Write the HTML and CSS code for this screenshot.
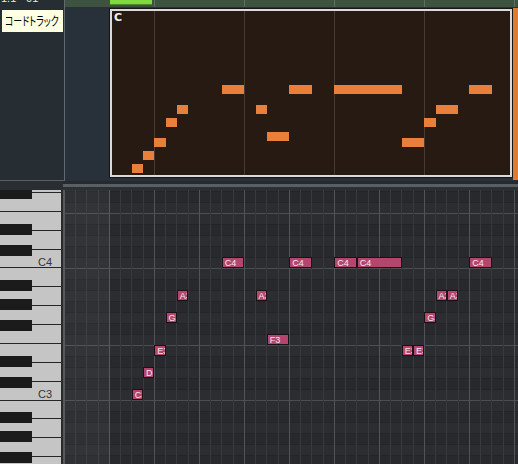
FILE: index.html
```html
<!DOCTYPE html>
<html lang="ja">
<head>
<meta charset="utf-8">
<title>Piano Roll</title>
<link rel="stylesheet" href="styles.css">
</head>
<body>
<div class="app">
  <div class="top">
    <div class="track-head">
      <div class="track-name">1.1 - 01</div>
      <div class="tooltip"><span class="tooltip-text">コードトラック</span></div>
    </div>
    <div class="lane">
      <div class="ruler"><div class="ruler-mark"></div></div>
      <div class="lane-body">
        <div class="chord-panel">
          <div class="chord-label">C</div>
          <div class="cn" style="left:19.8px;top:153px;width:11.25px"></div>
          <div class="cn" style="left:31.05px;top:140px;width:11.25px"></div>
          <div class="cn" style="left:42.3px;top:127px;width:11.25px"></div>
          <div class="cn" style="left:53.55px;top:107px;width:11.25px"></div>
          <div class="cn" style="left:64.8px;top:94px;width:11.25px"></div>
          <div class="cn" style="left:109.8px;top:74px;width:22.5px"></div>
          <div class="cn" style="left:143.55px;top:94px;width:11.25px"></div>
          <div class="cn" style="left:154.8px;top:120.5px;width:22.5px"></div>
          <div class="cn" style="left:177.3px;top:74px;width:22.5px"></div>
          <div class="cn" style="left:222.3px;top:74px;width:67.5px"></div>
          <div class="cn" style="left:289.8px;top:127px;width:22.5px"></div>
          <div class="cn" style="left:312.3px;top:107px;width:11.25px"></div>
          <div class="cn" style="left:323.55px;top:94px;width:22.5px"></div>
          <div class="cn" style="left:357.3px;top:74px;width:22.5px"></div>
        </div>
        <div class="orange"></div>
      </div>
    </div>
  </div>
  <div class="sep"><div class="sep-left"></div><div class="sep-right"></div></div>
  <div class="roll">
    <div class="keys">
      <svg width="61" height="274" viewBox="0 0 61 274" xmlns="http://www.w3.org/2000/svg">
        <rect x="0" y="0" width="61" height="274" fill="#c5c5c5"/>
        <g fill="#262626">
          <rect x="0" y="2" width="61" height="1"/>
          <rect x="0" y="21" width="61" height="1"/>
          <rect x="0" y="40" width="61" height="1"/>
          <rect x="0" y="59" width="61" height="1"/>
          <rect x="0" y="77" width="61" height="1"/>
          <rect x="0" y="96" width="61" height="1"/>
          <rect x="0" y="115" width="61" height="1"/>
          <rect x="0" y="134" width="61" height="1"/>
          <rect x="0" y="153" width="61" height="1"/>
          <rect x="0" y="172" width="61" height="1"/>
          <rect x="0" y="191" width="61" height="1"/>
          <rect x="0" y="210" width="61" height="1"/>
          <rect x="0" y="228" width="61" height="1"/>
          <rect x="0" y="247" width="61" height="1"/>
          <rect x="0" y="266" width="61" height="1"/>
        </g>
        <g fill="#1b1b1b">
          <rect x="0" y="-2" width="32" height="11"/>
          <rect x="0" y="34" width="32" height="11"/>
          <rect x="0" y="55" width="32" height="11"/>
          <rect x="0" y="90" width="32" height="11"/>
          <rect x="0" y="109" width="32" height="11"/>
          <rect x="0" y="130" width="32" height="11"/>
          <rect x="0" y="166" width="32" height="11"/>
          <rect x="0" y="187" width="32" height="11"/>
          <rect x="0" y="222" width="32" height="11"/>
          <rect x="0" y="241" width="32" height="11"/>
          <rect x="0" y="262" width="32" height="11"/>
        </g>
        <text class="key-label" x="52" y="76" text-anchor="end">C4</text>
        <text class="key-label" x="52" y="208" text-anchor="end">C3</text>
      </svg>
    </div>
    <div class="grid">
      <div class="note" style="left:67.8px;top:199px;width:11.25px">C3</div>
      <div class="note" style="left:79.05px;top:177px;width:11.25px">D3</div>
      <div class="note" style="left:90.3px;top:155px;width:11.25px">E3</div>
      <div class="note" style="left:101.55px;top:122px;width:11.25px">G3</div>
      <div class="note" style="left:112.8px;top:100px;width:11.25px">A3</div>
      <div class="note" style="left:157.8px;top:67px;width:22.5px">C4</div>
      <div class="note" style="left:191.55px;top:100px;width:11.25px">A3</div>
      <div class="note" style="left:202.8px;top:144px;width:22.5px">F3</div>
      <div class="note" style="left:225.3px;top:67px;width:22.5px">C4</div>
      <div class="note" style="left:270.3px;top:67px;width:22.5px">C4</div>
      <div class="note" style="left:292.8px;top:67px;width:45px">C4</div>
      <div class="note" style="left:337.8px;top:155px;width:11.25px">E3</div>
      <div class="note" style="left:349.05px;top:155px;width:11.25px">E3</div>
      <div class="note" style="left:360.3px;top:122px;width:11.25px">G3</div>
      <div class="note" style="left:371.55px;top:100px;width:11.25px">A3</div>
      <div class="note" style="left:382.8px;top:100px;width:11.25px">A3</div>
      <div class="note" style="left:405.3px;top:67px;width:22.5px">C4</div>
    </div>
  </div>
</div>
</body>
</html>
```
FILE: styles.css
```css
* { box-sizing: border-box; margin: 0; padding: 0; }
html, body { width: 518px; height: 464px; overflow: hidden; }
body { background: #2a2e33; font-family: "Liberation Sans", Arial, sans-serif; }

.app { display: flex; flex-direction: column; width: 518px; height: 464px; }

.top { display: flex; height: 181px; flex: none; }

.track-head {
  position: relative;
  width: 65px;
  background: #262d33;
  border-right: 1px solid #63696f;
  border-bottom: 1px solid #585e64;
  overflow: hidden;
}
.track-name {
  color: #e6e8ea;
  font-size: 11px;
  line-height: 12px;
  margin-top: -8px;
  padding-left: 1px;
  white-space: nowrap;
}
.tooltip {
  position: absolute;
  left: 2px;
  top: 10px;
  width: 61px;
  height: 22px;
  background: #ffffe1;
  color: #000;
  font-family: "Noto Sans CJK JP", sans-serif;
  font-size: 12px;
  line-height: 22px;
  padding-left: 3px;
  white-space: nowrap;
  overflow: hidden;
}
.tooltip-text {
  display: inline-block;
  font-feature-settings: "palt";
  transform: scaleX(0.74);
  transform-origin: left center;
}

.lane { flex: 1; display: flex; flex-direction: column; background: #28313a; }

.ruler {
  height: 7px;
  flex: none;
  background:
    repeating-linear-gradient(to right, transparent 0 89px, #5c715c 89px 90px),
    #3d523f;
}
.ruler-mark {
  margin-left: 45px;
  width: 42px;
  height: 5px;
  background: #80d93c;
  border-bottom: 1px solid #4d8c27;
}

.lane-body { flex: 1; display: flex; padding-left: 45px; }

.chord-panel {
  position: relative;
  width: 402px;
  margin: 2px 0 4px;
  border: 2px solid #dadada;
  box-shadow: 0 0 0 1px #161616;
  background:
    repeating-linear-gradient(to right, transparent 0 42px, #4a392f 42px 43px, transparent 43px 90px),
    #261a12;
}
.chord-label {
  color: #f2f2f2;
  font: bold 11px/11px "DejaVu Sans", sans-serif;
  padding: 1px 0 0 2px;
}
.cn { position: absolute; height: 9px; background: #e8803c; }

.orange { width: 5px; margin: 1px 0 1px 1px; background: #e27a34; }

.sep { display: flex; height: 9px; flex: none; }
.sep-left { width: 63px; background: #2a2e32; }
.sep-right {
  flex: 1;
  background: linear-gradient(to bottom, #262a2e 0 3px, #5a5f64 3px 6px, #2c2f33 6px 9px);
}

.roll { display: flex; flex: 1; min-height: 0; }
.keys { width: 63px; flex: none; border-right: 2px solid #2b2b2b; overflow: hidden; }
.keys svg { display: block; }
.key-label { font-family: "Liberation Sans", Arial, sans-serif; font-size: 11px; fill: #363636; }

.grid {
  flex: 1;
  position: relative;
  overflow: hidden;
  border-left: 1px solid #55595e;
  background:
    linear-gradient(to right, rgba(255,255,255,0.035) 0 46px, transparent 46px),
    repeating-linear-gradient(to right, #505358 0 1px, transparent 1px 45px),
    repeating-linear-gradient(to right, #37393d 0 1px, transparent 1px 11.25px),
    repeating-linear-gradient(to bottom, transparent 0 23px, #4a4d51 23px 24px, transparent 24px 78px, #4a4d51 78px 79px, transparent 79px 132px),
    repeating-linear-gradient(to bottom, #232529 1px 2px, transparent 2px 12px),
    repeating-linear-gradient(to bottom,
      #27292c 1px 12px, #2b2d31 12px 34px, #27292c 34px 45px, #2b2d31 45px 56px,
      #27292c 56px 67px, #2b2d31 67px 89px, #27292c 89px 100px, #2b2d31 100px 111px,
      #27292c 111px 122px, #2b2d31 122px 133px);
}

.note {
  position: absolute;
  height: 11px;
  border: 1px solid #1d1115;
  background: #b4466e;
  color: #f6e8ee;
  font: 9px/10px "Liberation Sans", Arial, sans-serif;
  padding-left: 2px;
  overflow: hidden;
  white-space: nowrap;
}
```
